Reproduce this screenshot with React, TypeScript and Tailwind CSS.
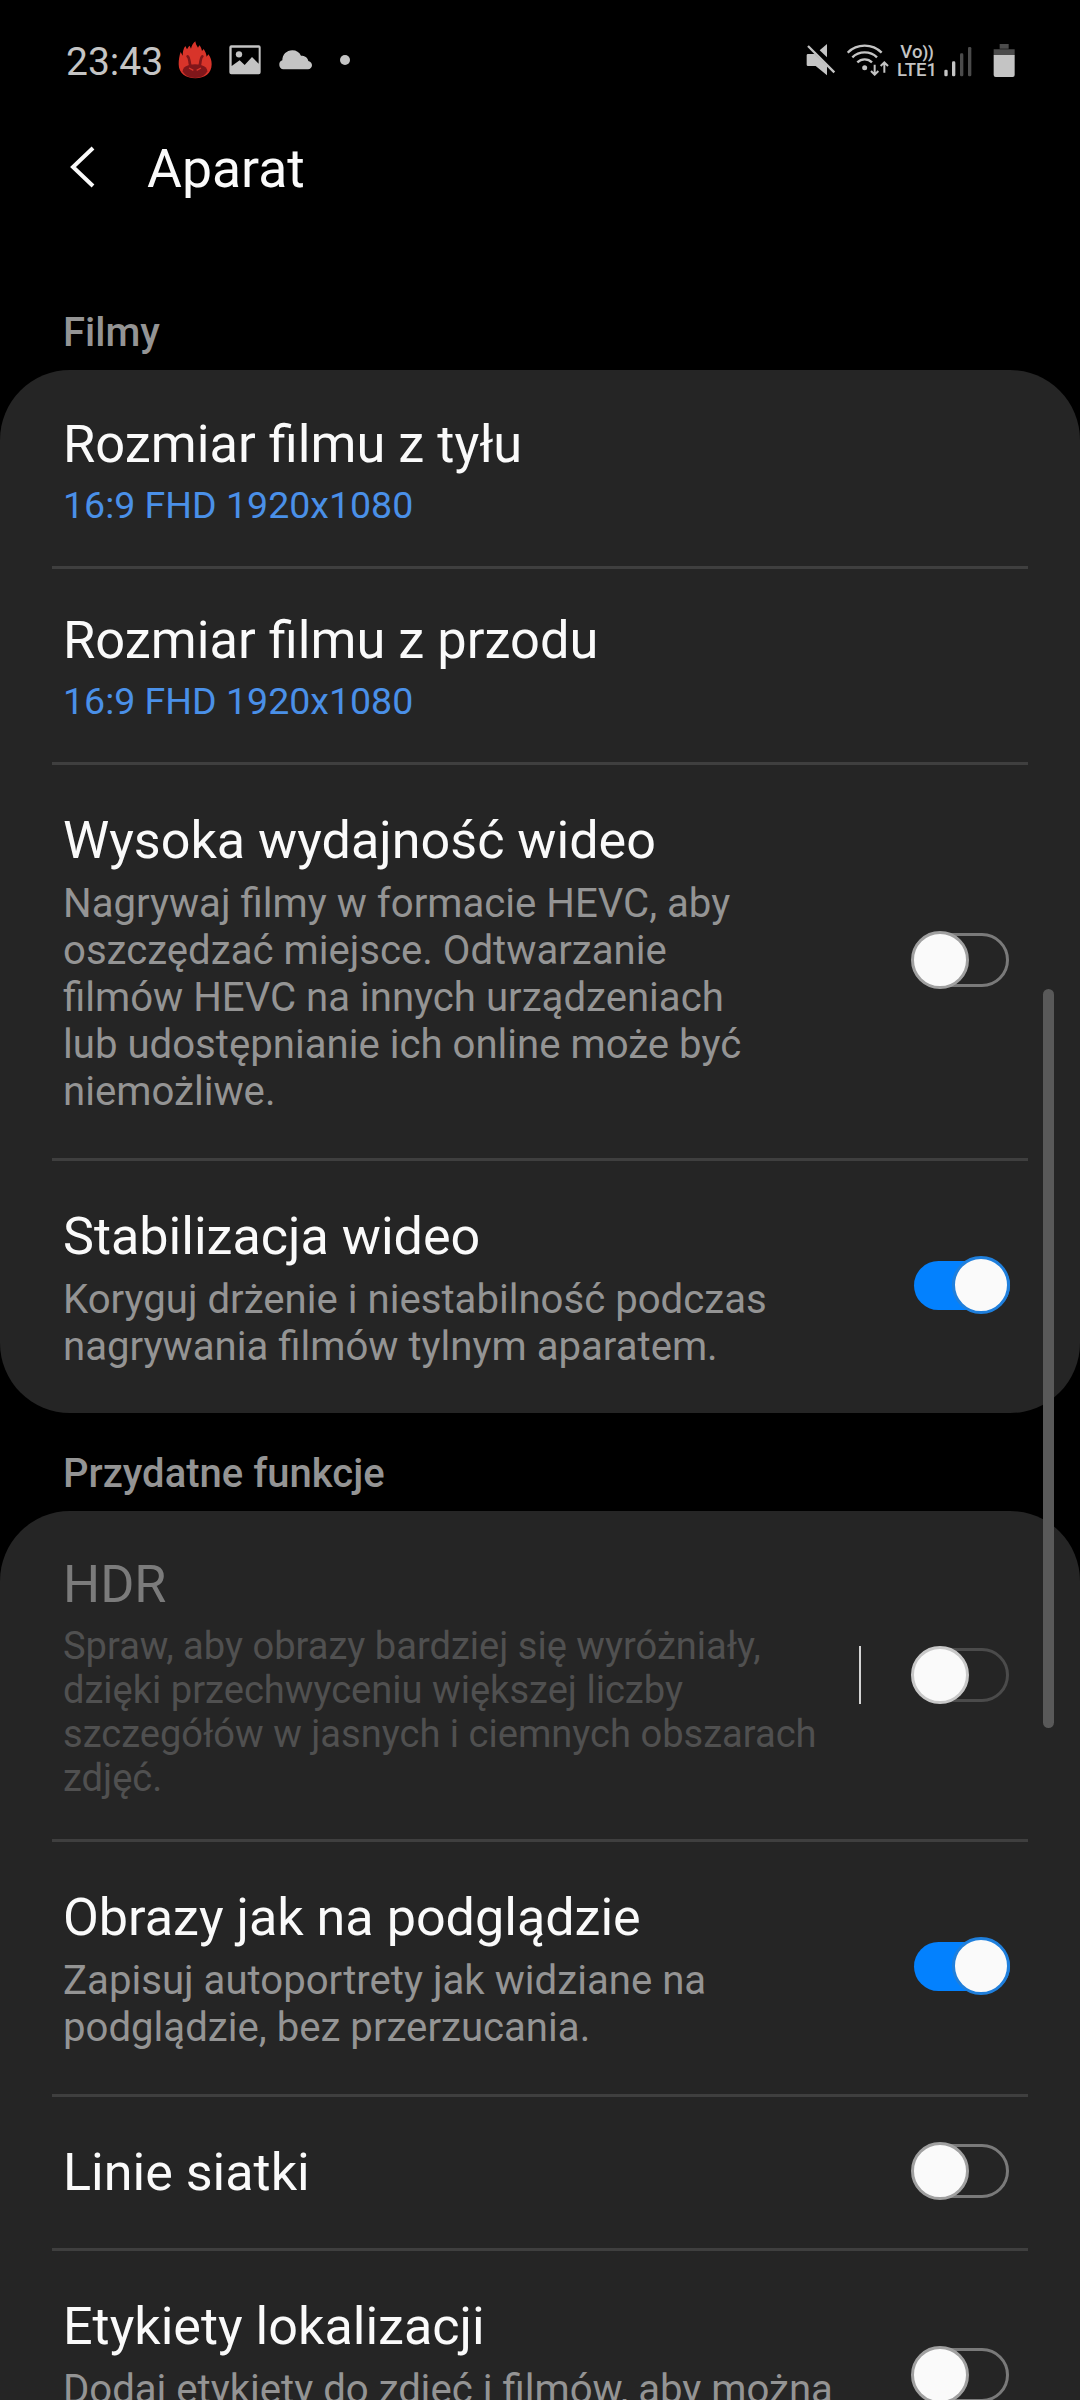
import type { ReactNode } from "react";
import { clsx } from "clsx";

type RowProps = {
  title: string;
  lines?: string[];
  value?: string;
  on?: boolean;
  disabled?: boolean;
  first?: boolean;
  height: string;
};

function FireIcon() {
  return (
    <svg className="h-[38px] w-[34px]" viewBox="414 65 102 114">
      <path
        d="M466 177c-28 0-50-14-50-42 0-13 2-26 6-37l6 11c0-11 2-21 8-29l5 10c2-4 4-8 8-11l4 9c2-9 6-16 13-22 1 8 4 13 8 19l4-7c5 5 7 11 8 17l5-6c5 8 8 15 9 23l5-7c7 9 10 19 10 30 0 28-21 42-49 42z"
        fill="#d8342a"
      />
      <path
        d="M428 156c0-12 14-21 37-21s37 9 37 21c-6 13-20 20-37 20s-31-7-37-20z"
        fill="#80161a"
      />
      <path
        d="M443 111c7 5 4 15 8 28M487 111c-7 5-4 15-8 28"
        fill="none"
        stroke="#80161a"
        strokeWidth="8"
        strokeLinecap="round"
      />
      <path d="M447 146l13 7M483 146l-13 7" stroke="#d8342a" strokeWidth="4" />
    </svg>
  );
}

function ImageIcon() {
  return (
    <svg className="h-[30px] w-8" viewBox="567 77 96 90" fill="#c4c4c4">
      <path
        fillRule="evenodd"
        d="M574 78h82a6 6 0 0 1 6 6v75a6 6 0 0 1-6 6h-82a6 6 0 0 1-6-6V84a6 6 0 0 1 6-6zm1 7v55l24-17 15 14 22-24 20 20V85z"
      />
      <circle cx="597" cy="105" r="9.500" />
    </svg>
  );
}

function CloudIcon() {
  return (
    <svg className="h-5 w-[34px]" viewBox="714 89 102 60" fill="#c4c4c4">
      <path d="M730 147a14 14 0 0 1-3-27c0-17 13-30 30-30 12 0 21 6 26 16 11 0 20 5 22 16 8 3 11 7 11 13 0 7-5 12-12 12z" />
    </svg>
  );
}

function MuteIcon() {
  return (
    <svg className="h-8 w-[30px]" viewBox="78 73 90 96" fill="#c4c4c4">
      <path d="M84 103h20l37 36v28l-34-28H84a4 4 0 0 1-4-4v-28a4 4 0 0 1 4-4z" />
      <path d="M119 92l22-19v40z" />
      <path d="M88 75l79 79" stroke="#000" strokeWidth="7" />
      <path d="M84 79l79 79" stroke="#c4c4c4" strokeWidth="7" />
    </svg>
  );
}

function WifiIcon() {
  return (
    <svg className="h-8 w-[42px]" viewBox="203 73 126 96" fill="none" stroke="#c4c4c4" strokeWidth="7">
      <path d="M205 99c28-28 74-28 102 0M219 113c20-20 54-20 74 0M234 128c12-12 32-12 44 0" />
      <circle cx="256" cy="144" r="7.500" fill="#c4c4c4" stroke="none" />
      <path d="M286 135v30M275 154l11 11 11-11M315 159v-30M304 139l11-11 11 11" strokeWidth="6" />
    </svg>
  );
}

function SignalIcon() {
  return (
    <svg className="h-[30px] w-7" viewBox="494 80 84 90">
      <rect x="495" y="148" width="10" height="20" rx="4" fill="#c4c4c4" />
      <rect x="518" y="123" width="10" height="45" rx="4" fill="#c4c4c4" />
      <rect x="542" y="99" width="10" height="69" rx="4" fill="#4b4b4b" />
      <rect x="566" y="80" width="10" height="88" rx="4" fill="#4b4b4b" />
    </svg>
  );
}

function BatteryIcon() {
  return (
    <svg className="h-[33px] w-[22px]" viewBox="640 72 66 99">
      <path d="M660 72h27v14h-27zM642 88h63v18h-63z" fill="#4b4b4b" />
      <path d="M642 105h63v60a6 6 0 0 1-6 6h-51a6 6 0 0 1-6-6z" fill="#c4c4c4" />
    </svg>
  );
}

function StatusBar() {
  return (
    <div className="flex h-[120px] items-center pr-[65px] pl-[66px] text-[#c4c4c4]">
      <span className="w-[112px] pt-1 text-[39px] leading-none">23:43</span>
      <FireIcon />
      <div className="ml-[17px]">
        <ImageIcon />
      </div>
      <div className="ml-[17px]">
        <CloudIcon />
      </div>
      <div className="ml-[28px] size-[10px] rounded-full bg-[#c4c4c4]" />
      <div className="ml-auto flex items-center">
        <MuteIcon />
        <div className="ml-[11px]">
          <WifiIcon />
        </div>
        <div className="ml-[8px] flex w-[40px] flex-col items-center pt-px leading-[18px] font-medium">
          <span className="h-[18px] text-[18.5px]">
            Vo<span className="text-[16px] leading-none font-bold">))</span>
          </span>
          <span className="h-[18px] text-[18.5px]">LTE1</span>
        </div>
        <div className="ml-[7px] pt-[3px]">
          <SignalIcon />
        </div>
        <div className="ml-[21px] pt-px">
          <BatteryIcon />
        </div>
      </div>
    </div>
  );
}

function Switch({ on, disabled }: { on?: boolean; disabled?: boolean }) {
  if (on) {
    return (
      <div className="-mr-px mb-px flex h-[49px] w-[96px] shrink-0 items-center justify-end rounded-full bg-[#0381fe]">
        <div className="size-[58px] shrink-0 rounded-full border-3 border-[#1f7fdc] bg-[#fafafa]" />
      </div>
    );
  }
  return (
    <div
      className={clsx(
        "flex h-[54px] w-[96px] shrink-0 items-center rounded-full border-3",
        disabled ? "border-[#4b4b4b]" : "border-[#7a7a7a]",
      )}
    >
      <div
        className={clsx(
          "-ml-[5px] size-[58px] shrink-0 rounded-full border-3 bg-[#fafafa]",
          disabled ? "border-[#c8c8c8]" : "border-[#a0a0a0]",
        )}
      />
    </div>
  );
}

function Row({ title, lines, value, on, disabled, first, height }: RowProps) {
  const hasSwitch = on !== undefined;
  return (
    <div
      className={clsx(
        "mx-[52px] flex shrink-0 border-t-3 pr-[19px] pl-[11px]",
        height,
        first ? "border-transparent" : "border-[#3f3f3f]",
      )}
    >
      <div className={clsx("flex-1 whitespace-nowrap", hasSwitch && !disabled ? "pt-[46px]" : "pt-[41px]")}>
        <h2
          className={clsx(
            "leading-[60px]",
            hasSwitch ? "text-[52.1px]" : "text-[52.4px]",
            disabled ? "text-[#7b7b7b]" : "text-[#fafafa]",
          )}
        >
          {title}
        </h2>
        {value && <p className="mt-[9px] text-[37.5px] leading-[44px] text-[#4a90e8]">{value}</p>}
        {lines && (
          <div
            className={clsx(
              "mt-[9px]",
              disabled ? "text-[38.1px] leading-[44px] text-[#505050]" : "text-[40.15px] leading-[47px] text-[#949494]",
            )}
          >
            {lines.map((line) => (
              <p key={line}>{line}</p>
            ))}
          </div>
        )}
      </div>
      {hasSwitch && (
        <div className="flex items-center pb-[3px]">
          {disabled && <div className="mr-[52px] h-[58px] w-[2px] bg-[#d4d4d4]" />}
          <Switch on={on} disabled={disabled} />
        </div>
      )}
    </div>
  );
}

function Section({ label, className, children }: { label: string; className: string; children: ReactNode }) {
  return (
    <section>
      <h3 className={clsx("flex items-end pl-[63px] text-[40px] leading-[46px] font-medium text-[#949494]", className)}>
        {label}
      </h3>
      <div className="rounded-[70px] bg-[#252525]">{children}</div>
    </section>
  );
}

export default function App() {
  return (
    <div className="relative h-[2400px] w-[1080px] overflow-hidden bg-black font-['Roboto',sans-serif]">
      <StatusBar />
      <header className="flex h-[96px] items-center pl-[68px] text-[#fafafa]">
        <svg className="h-[44px] w-[30px]" viewBox="0 0 30 44" fill="none" stroke="#fafafa" strokeWidth="4">
          <path d="M25 2L5 21L25 40" />
        </svg>
        <h1 className="ml-[49px] pt-[2px] text-[53.5px] leading-[64px]">Aparat</h1>
      </header>

      <Section label="Filmy" className="h-[154px] pb-[14px]">
        <Row title="Rozmiar filmu z tyłu" value="16:9 FHD 1920x1080" height="h-[196px]" first />
        <Row title="Rozmiar filmu z przodu" value="16:9 FHD 1920x1080" height="h-[196px]" />
        <Row
          title="Wysoka wydajność wideo"
          lines={[
            "Nagrywaj filmy w formacie HEVC, aby",
            "oszczędzać miejsce. Odtwarzanie",
            "filmów HEVC na innych urządzeniach",
            "lub udostępnianie ich online może być",
            "niemożliwe.",
          ]}
          on={false}
          height="h-[396px]"
        />
        <Row
          title="Stabilizacja wideo"
          lines={["Koryguj drżenie i niestabilność podczas", "nagrywania filmów tylnym aparatem."]}
          on
          height="h-[255px]"
        />
      </Section>

      <Section label="Przydatne funkcje" className="h-[98px] pb-[14px]">
        <Row
          title="HDR"
          lines={[
            "Spraw, aby obrazy bardziej się wyróżniały,",
            "dzięki przechwyceniu większej liczby",
            "szczegółów w jasnych i ciemnych obszarach",
            "zdjęć.",
          ]}
          on={false}
          disabled
          first
          height="h-[328px]"
        />
        <Row
          title="Obrazy jak na podglądzie"
          lines={["Zapisuj autoportrety jak widziane na", "podglądzie, bez przerzucania."]}
          on
          height="h-[255px]"
        />
        <Row title="Linie siatki" on={false} height="h-[154px]" />
        <Row
          title="Etykiety lokalizacji"
          lines={["Dodaj etykiety do zdjęć i filmów, aby można"]}
          on={false}
          height="h-[254px]"
        />
      </Section>

      {/* scrollbar thumb */}
      <div className="absolute top-[989px] right-[26px] h-[739px] w-[11px] rounded-full bg-[#595959]" />
    </div>
  );
}
